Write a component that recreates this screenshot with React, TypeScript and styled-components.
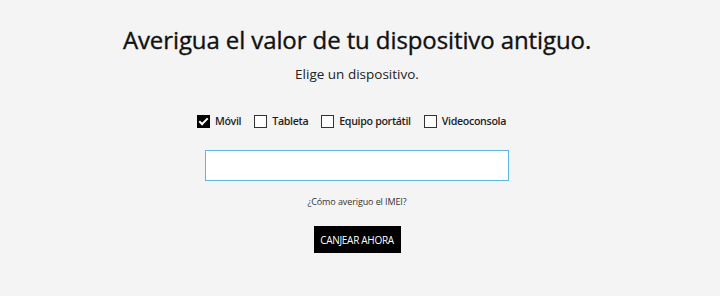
import React, { useState } from 'react';
import styled, { createGlobalStyle } from 'styled-components';

const GlobalStyle = createGlobalStyle`
    html, body {
        margin: 0;
        padding: 0;
        background: #f4f4f4;
    }
    body {
        font-family: "Open Sans", "Noto Sans", sans-serif;
        color: #222;
    }
`;

const Page = styled.div`
    width: 720px;
    height: 296px;
    display: flex;
    flex-direction: column;
    align-items: center;
    padding: 23px 6px 0 0;
    box-sizing: border-box;
`;

const Title = styled.h1`
    margin: 0;
    font-size: 24px;
    font-weight: 500;
    line-height: 34px;
    letter-spacing: -0.1px;
    color: #111;
    -webkit-text-stroke: 0.35px #111;
`;

const Subtitle = styled.p`
    margin: 7px 0 0 0;
    font-size: 13.5px;
    line-height: 20px;
    color: #222;
`;

const Options = styled.div`
    display: flex;
    flex-direction: row;
    align-items: center;
    gap: 13px;
    margin-top: 30px;
    padding-right: 11px;
`;

const Option = styled.label`
    display: flex;
    align-items: center;
    gap: 5px;
    font-size: 10.7px;
    font-weight: 600;
    letter-spacing: -0.35px;
    color: #1f1f1f;
    cursor: pointer;
`;

const Box = styled.input`
    appearance: none;
    margin: 0;
    width: 13px;
    height: 13px;
    border: 1px solid #333;
    background: #fff;
    box-sizing: border-box;
    position: relative;

    &:checked {
        background: #000;
        border-color: #000;
    }
    &:checked::after {
        content: '';
        position: absolute;
        left: 3px;
        top: 0px;
        width: 3px;
        height: 7px;
        border: solid #fff;
        border-width: 0 2px 2px 0;
        transform: rotate(45deg);
    }
`;

const Field = styled.input`
    margin-top: 22px;
    width: 304px;
    height: 31px;
    box-sizing: border-box;
    border: 1px solid #5fb6de;
    background: #fff;
    outline: none;
`;

const HelpLink = styled.a`
    margin-top: 14px;
    font-size: 9px;
    letter-spacing: -0.1px;
    color: #333;
    text-decoration: none;
`;

const Submit = styled.button`
    margin-top: 18px;
    width: 87px;
    height: 27px;
    border: none;
    background: #000;
    color: #fff;
    font-family: "Open Sans", sans-serif;
    font-size: 10px;
    letter-spacing: -0.3px;
    text-transform: uppercase;
    cursor: pointer;
`;

const devices = ['Móvil', 'Tableta', 'Equipo portátil', 'Videoconsola'];

const App: React.FC = () => {
    const [selected, setSelected] = useState<string[]>(['Móvil']);

    const toggle = (d: string) =>
        setSelected(s => (s.includes(d) ? s.filter(x => x !== d) : [...s, d]));

    return (
        <Page>
            <GlobalStyle />
            <Title>Averigua el valor de tu dispositivo antiguo.</Title>
            <Subtitle>Elige un dispositivo.</Subtitle>
            <Options>
                {devices.map(d => (
                    <Option key={d}>
                        <Box type="checkbox" checked={selected.includes(d)} onChange={() => toggle(d)} />
                        {d}
                    </Option>
                ))}
            </Options>
            <Field type="text" />
            <HelpLink href="#">¿Cómo averiguo el IMEI?</HelpLink>
            <Submit>Canjear ahora</Submit>
        </Page>
    );
};

export default App;
